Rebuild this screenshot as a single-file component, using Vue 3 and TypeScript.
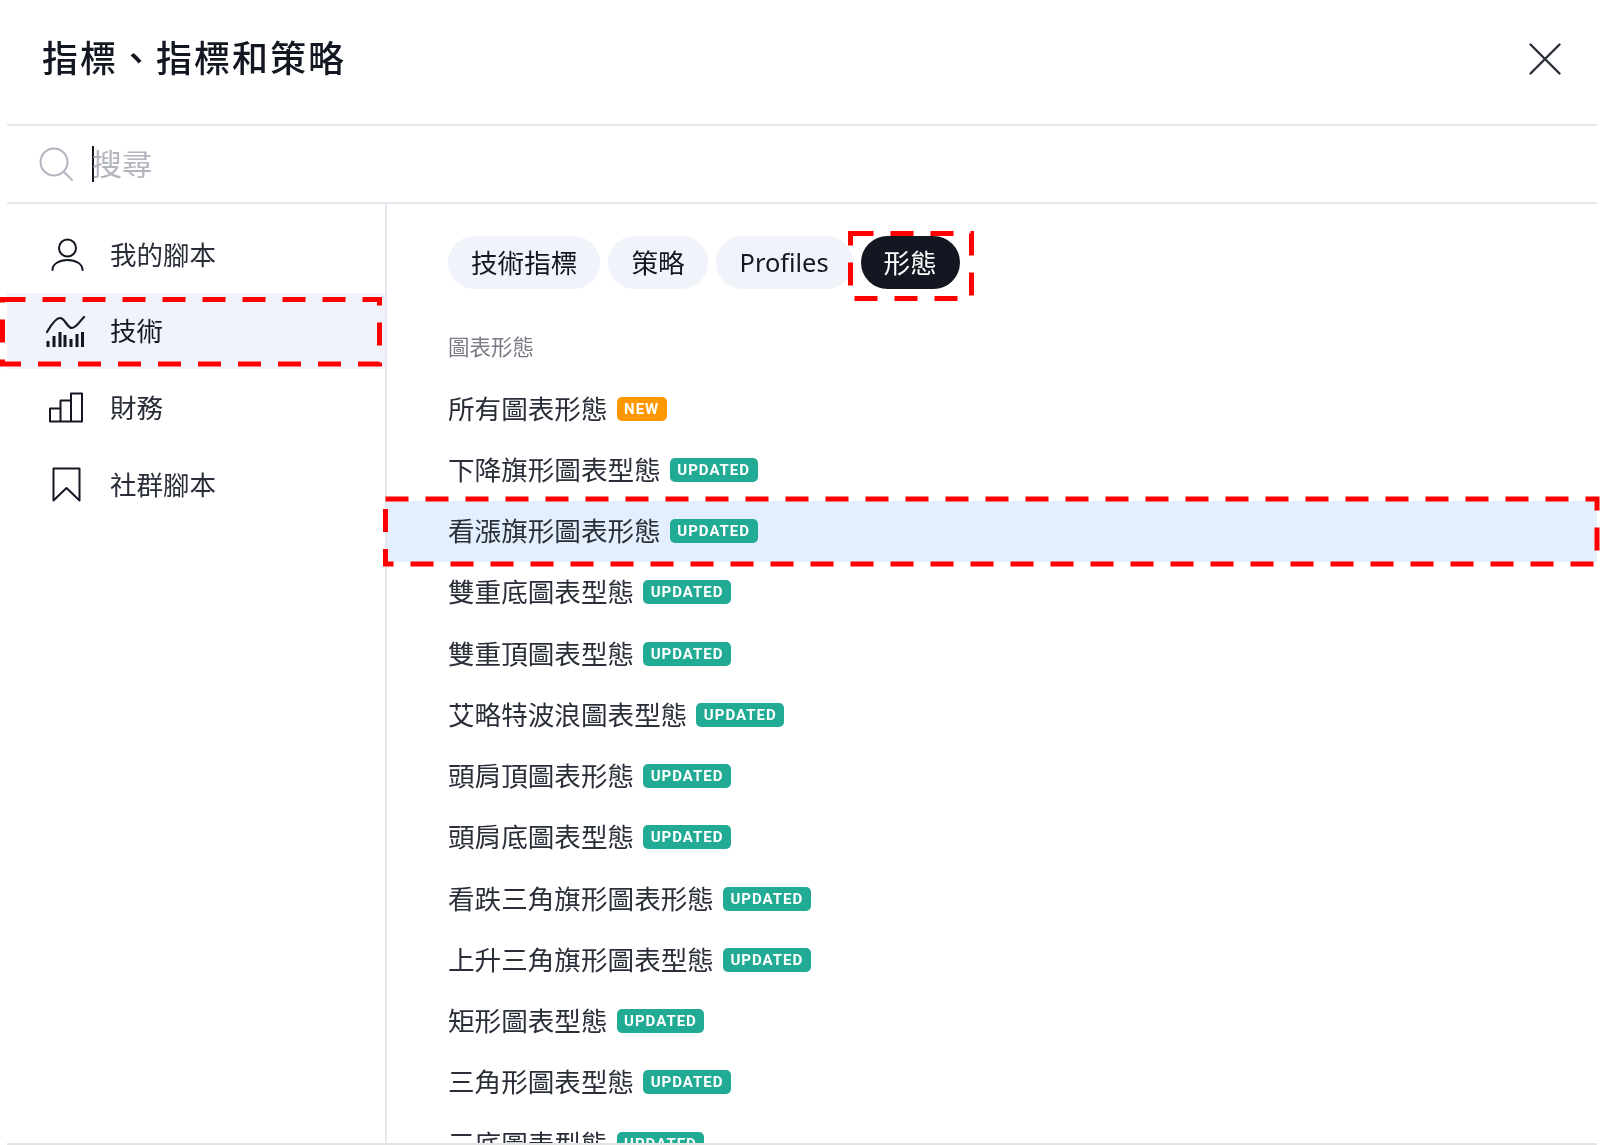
<script setup lang="ts">
interface Row {
  name: string
  badge: 'NEW' | 'UPDATED'
  selected?: boolean
}

const rows: Row[] = [
  { name: '所有圖表形態', badge: 'NEW' },
  { name: '下降旗形圖表型態', badge: 'UPDATED' },
  { name: '看漲旗形圖表形態', badge: 'UPDATED', selected: true },
  { name: '雙重底圖表型態', badge: 'UPDATED' },
  { name: '雙重頂圖表型態', badge: 'UPDATED' },
  { name: '艾略特波浪圖表型態', badge: 'UPDATED' },
  { name: '頭肩頂圖表形態', badge: 'UPDATED' },
  { name: '頭肩底圖表型態', badge: 'UPDATED' },
  { name: '看跌三角旗形圖表形態', badge: 'UPDATED' },
  { name: '上升三角旗形圖表型態', badge: 'UPDATED' },
  { name: '矩形圖表型態', badge: 'UPDATED' },
  { name: '三角形圖表型態', badge: 'UPDATED' },
  { name: '三底圖表型態', badge: 'UPDATED' },
]

const pills = ['技術指標', '策略', 'Profiles', '形態']
</script>

<template>
  <div class="page">
    <header class="head">
      <h1 class="title">指標、指標和策略</h1>
      <svg class="close" width="36" height="36" viewBox="0 0 36 36" fill="none" stroke="#2a2e39" stroke-width="2.4" stroke-linecap="round">
        <path d="M3.5 3.5L32.5 32.5M32.5 3.5L3.5 32.5" />
      </svg>
    </header>

    <div class="search">
      <svg class="lens" width="38" height="38" viewBox="0 0 38 38" fill="none" stroke="#b2b5be" stroke-width="2">
        <circle cx="16" cy="15" r="13.5" />
        <path d="M26 25l8 8" stroke-linecap="round" />
      </svg>
      <span class="caret"></span>
      <span class="placeholder">搜尋</span>
    </div>

    <div class="body">
      <nav class="side">
        <div class="side-item">
          <svg width="40" height="40" viewBox="0 0 40 40" fill="none" stroke="#131722" stroke-width="2">
            <circle cx="21.5" cy="14" r="8.5" />
            <path d="M6.5 36C6.5 30 13 26 21.5 26S36.5 30 36.5 36" stroke-linecap="round" />
          </svg>
          <span>我的腳本</span>
        </div>
        <div class="side-item active">
          <svg width="40" height="40" viewBox="0 0 40 40" fill="none" stroke="#131722" stroke-width="2.2">
            <path d="M1 21C4 16 9 7 14 7C19 7 21 17 26 17C30 17 34 10 38 6" stroke-linecap="round" />
            <path d="M2 36V30M8 36V25M14 36V21M19 36V24M25 36V28M31 36V23M36.5 36V21" stroke-width="3" />
          </svg>
          <span>技術</span>
        </div>
        <div class="side-item">
          <svg width="40" height="40" viewBox="0 0 40 40" fill="none" stroke="#131722" stroke-width="2">
            <path d="M4 34.5V21.5H14.5V34.5ZM14.5 34.5V13.5H25V34.5ZM25 34.5V6.5H36V34.5Z" stroke-linejoin="round" />
          </svg>
          <span>財務</span>
        </div>
        <div class="side-item">
          <svg width="40" height="40" viewBox="0 0 40 40" fill="none" stroke="#131722" stroke-width="2">
            <path d="M7.5 4.5H33.5V36.5L20.5 24L7.5 36.5Z" stroke-linejoin="round" />
          </svg>
          <span>社群腳本</span>
        </div>
      </nav>

      <main class="content">
        <div class="pills">
          <span
            v-for="(p, i) in pills"
            :key="p"
            class="pill"
            :class="{ on: i === pills.length - 1, latin: p === 'Profiles' }"
          >{{ p }}</span>
        </div>
        <div class="label">圖表形態</div>
        <div class="list">
          <div
            v-for="r in rows"
            :key="r.name"
            class="row"
            :class="{ selected: r.selected }"
          >
            <span class="name">{{ r.name }}</span>
            <span class="badge" :class="r.badge === 'NEW' ? 'new' : 'upd'">{{ r.badge }}</span>
          </div>
        </div>
      </main>
    </div>

    <svg class="marks" width="1600" height="1145" viewBox="0 0 1600 1145" fill="none" stroke="#f00" stroke-width="5" stroke-dasharray="23 17">
      <rect x="2.5" y="299.5" width="377" height="64.5" />
      <rect x="850.5" y="233.5" width="121" height="65" />
      <rect x="385.5" y="499" width="1211.5" height="65" />
    </svg>
  </div>
</template>

<style>
html,
body {
  margin: 0;
  background: #fff;
}
</style>

<style scoped>
.page {
  position: relative;
  width: 1600px;
  height: 1145px;
  overflow: hidden;
  box-sizing: border-box;
  padding: 0 3px 0 7px;
  background: #fff;
  color: #131722;
  font-family: "Noto Sans", "Noto Sans CJK TC", sans-serif;
  display: flex;
  flex-direction: column;
  filter: blur(0.4px);
}
.head {
  height: 126px;
  flex: none;
  display: flex;
  align-items: center;
  justify-content: space-between;
  padding: 0 34px 7px 35px;
  box-sizing: border-box;
  border-bottom: 2px solid #e6e8f0;
}
.title {
  margin: 0;
  font-size: 36px;
  line-height: 46px;
  font-weight: 500;
  letter-spacing: 2px;
  color: #131722;
}
.search {
  height: 78px;
  flex: none;
  box-sizing: border-box;
  display: flex;
  align-items: center;
  padding-left: 31px;
  border-bottom: 2px solid #e6e8f0;
}
.lens {
  margin-top: 3px;
}
.caret {
  width: 2px;
  height: 36px;
  background: #131722;
  margin-left: 16px;
}
.placeholder {
  font-size: 30px;
  line-height: 36px;
  color: #b2b5be;
  margin-left: -2px;
}
.body {
  flex: 1;
  min-height: 0;
  display: flex;
  border-bottom: 2px solid #e3e3e3;
}
.side {
  width: 380px;
  flex: none;
  box-sizing: border-box;
  padding-top: 12px;
  border-right: 2px solid #e6e8f0;
}
.side-item {
  height: 76.6px;
  display: flex;
  align-items: center;
  padding-left: 39px;
  gap: 24px;
  font-size: 26.5px;
  color: #2a2e39;
}
.side-item span {
  padding-bottom: 2px;
}
.side-item.active {
  background: #f0f3fa;
  color: #131722;
}
.side-item svg {
  flex: none;
}
.content {
  flex: 1;
  min-width: 0;
  overflow: hidden;
  padding-top: 32px;
}
.pills {
  display: flex;
  gap: 8px;
  padding-left: 61px;
}
.pill {
  height: 53px;
  box-sizing: border-box;
  padding: 0 23px 2px;
  display: flex;
  align-items: center;
  border-radius: 27px;
  background: #f0f3fa;
  font-size: 26.6px;
  color: #131722;
}
.pill.latin {
  font-size: 25.4px;
  padding: 0 24px 2px;
}
.pill.on {
  background: #131722;
  color: #fff;
}
.label {
  margin-top: 44px;
  padding-left: 61px;
  font-size: 21.5px;
  line-height: 28px;
  color: #787b86;
}
.list {
  margin-top: 17px;
}
.row {
  height: 61.25px;
  display: flex;
  align-items: center;
  gap: 9px;
  padding-left: 61px;
}
.row.selected {
  background: #e3effd;
}
.name {
  font-size: 26.6px;
  line-height: 36px;
  color: #2a2e39;
}
.badge {
  height: 24px;
  border-radius: 5px;
  padding: 0 7.5px;
  display: flex;
  align-items: center;
  font-family: "Roboto", sans-serif;
  font-size: 15px;
  font-weight: 700;
  letter-spacing: 1px;
  color: #fff;
  box-sizing: border-box;
}
.badge.upd {
  background: #22ab94;
}
.badge.new {
  background: #ff9800;
}
.marks {
  position: absolute;
  left: 0;
  top: 0;
  pointer-events: none;
}
</style>
